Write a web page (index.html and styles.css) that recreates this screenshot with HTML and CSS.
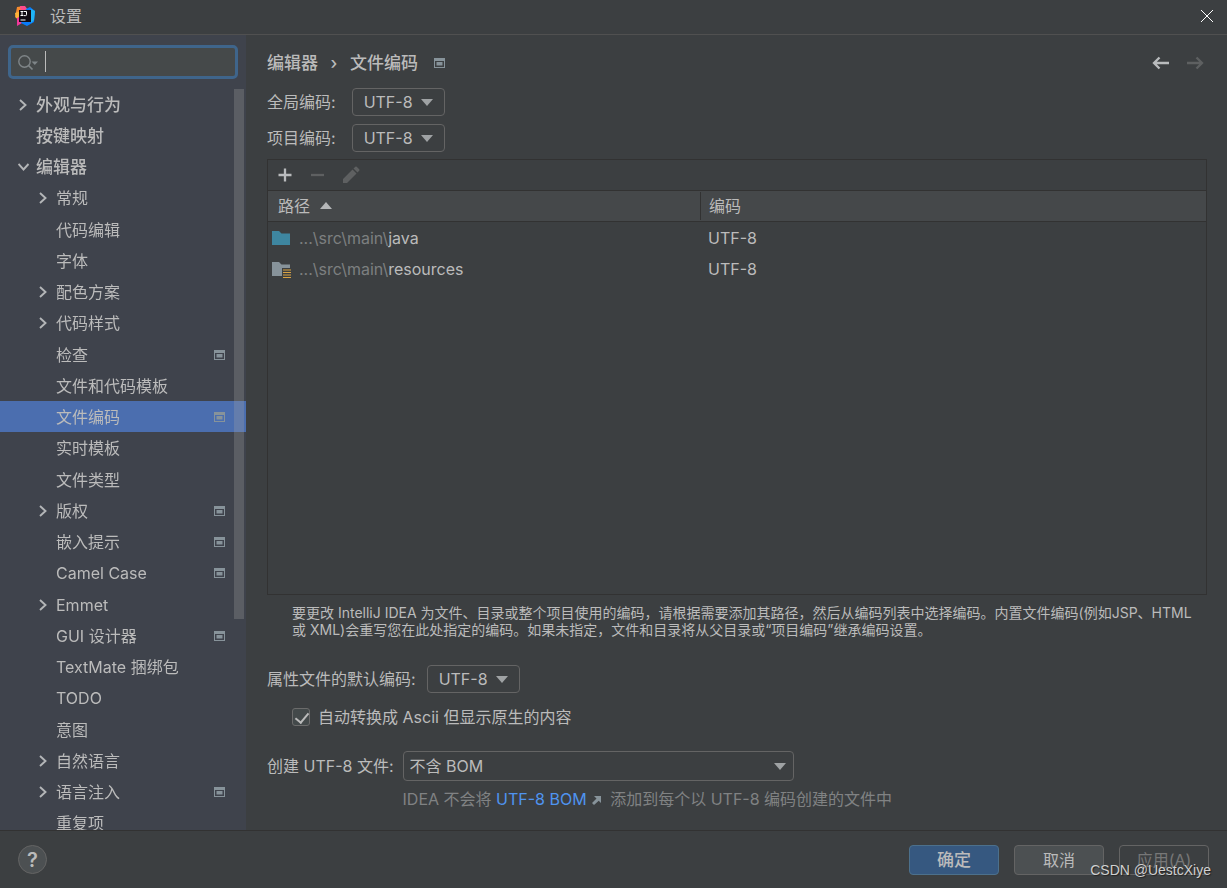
FILE: index.html
```html
<!DOCTYPE html>
<html lang="zh-CN">
<head>
<meta charset="utf-8">
<title>设置</title>
<meta name="viewport" content="width=device-width, initial-scale=1">
<link rel="stylesheet" href="styles.css">
</head>
<body>
<svg class="defs" aria-hidden="true">
  <symbol id="right" viewBox="0 0 10 12"><path d="M2 1 7.500 6 2 11" fill="none" stroke="#b4b6b8" stroke-width="1.900"/></symbol>
  <symbol id="down" viewBox="0 0 12 12"><path d="M0.500 3 5.500 8.500 10.500 3" fill="none" stroke="#b4b6b8" stroke-width="1.900"/></symbol>
  <symbol id="proj" viewBox="0 0 11 10"><path d="M0 0h11v10H0zM1 3v6h9V3z" fill="#87939a" fill-rule="evenodd"/><path d="M2.500 4h6v3.500h-6z" fill="#87939a"/></symbol>
</svg>
<div class="window">
  <header class="titlebar">
    <svg class="logo" viewBox="0 0 20 20" aria-hidden="true">
      <path d="M2 1 9 0 12 5 5 15 0 11z" fill="#f58b2f"/>
      <path d="M5 0 10 0 13 4 6 7z" fill="#fe4a8b"/>
      <path d="M0 7 6 5 5 13 1 12z" fill="#fbb43a"/>
      <path d="M2 12 8 9 9 17 7 17 2 20z" fill="#f0389a"/>
      <path d="M11 3 15 1 20 5 19 16 12 20 6 17z" fill="#087cfa"/>
      <path d="M16 3 20 5 19 14 16 17z" fill="#20b5f5"/>
      <path d="M4 4h12v12H4z" fill="#110b12"/>
      <path d="M5.500 5.500h3M7 5.500v4M5.500 9.500h3M9 5.500h2.500v3.200q0 .9-1 .9H9M5.500 14h5" fill="none" stroke="#fff"/>
    </svg>
    <h1 class="title">设置</h1>
    <button class="icon-button close" type="button" aria-label="关闭"><svg width="12" height="12" viewBox="0 0 12 12"><path d="M0 0 12 12M12 0 0 12" stroke="#fff" stroke-width="1"/></svg></button>
  </header>

  <div class="body">
    <nav class="sidebar" aria-label="设置">
      <div class="search">
        <svg class="search-icon" width="20" height="16" viewBox="0 0 20 16" aria-hidden="true"><circle cx="6.500" cy="6.500" r="5.700" fill="none" stroke="#7f8588" stroke-width="1.400"/><path d="m10.500 10.500 4 4" stroke="#7f8588" stroke-width="1.700"/><path d="M13.500 6.500H20l-3.200 3.600z" fill="#7f8588"/></svg>
        <input class="search-input" type="text" aria-label="搜索" autofocus>
        <span class="caret"></span>
      </div>
      <div class="tree-area">
        <ul class="tree">
          <li class="row top"><svg class="arrow"><use href="#right"/></svg><span>外观与行为</span></li>
          <li class="row top"><span class="arrow"></span><span>按键映射</span></li>
          <li class="row top"><svg class="arrow open"><use href="#down"/></svg><span>编辑器</span></li>
          <li class="row"><svg class="arrow"><use href="#right"/></svg><span>常规</span></li>
          <li class="row"><span class="arrow"></span><span>代码编辑</span></li>
          <li class="row"><span class="arrow"></span><span>字体</span></li>
          <li class="row"><svg class="arrow"><use href="#right"/></svg><span>配色方案</span></li>
          <li class="row"><svg class="arrow"><use href="#right"/></svg><span>代码样式</span></li>
          <li class="row"><span class="arrow"></span><span>检查</span><svg class="proj"><use href="#proj"/></svg></li>
          <li class="row"><span class="arrow"></span><span>文件和代码模板</span></li>
          <li class="row selected"><span class="arrow"></span><span>文件编码</span><svg class="proj"><use href="#proj"/></svg></li>
          <li class="row"><span class="arrow"></span><span>实时模板</span></li>
          <li class="row"><span class="arrow"></span><span>文件类型</span></li>
          <li class="row"><svg class="arrow"><use href="#right"/></svg><span>版权</span><svg class="proj"><use href="#proj"/></svg></li>
          <li class="row"><span class="arrow"></span><span>嵌入提示</span><svg class="proj"><use href="#proj"/></svg></li>
          <li class="row"><span class="arrow"></span><span>Camel Case</span><svg class="proj"><use href="#proj"/></svg></li>
          <li class="row"><svg class="arrow"><use href="#right"/></svg><span>Emmet</span></li>
          <li class="row"><span class="arrow"></span><span>GUI 设计器</span><svg class="proj"><use href="#proj"/></svg></li>
          <li class="row"><span class="arrow"></span><span>TextMate 捆绑包</span></li>
          <li class="row"><span class="arrow"></span><span>TODO</span></li>
          <li class="row"><span class="arrow"></span><span>意图</span></li>
          <li class="row"><svg class="arrow"><use href="#right"/></svg><span>自然语言</span></li>
          <li class="row"><svg class="arrow"><use href="#right"/></svg><span>语言注入</span><svg class="proj"><use href="#proj"/></svg></li>
          <li class="row"><span class="arrow"></span><span>重复项</span></li>
        </ul>
        <div class="scroll-thumb"></div>
      </div>
    </nav>

    <main class="main">
      <div class="heading">
        <h2 class="crumbs"><span>编辑器</span><span class="sep">›</span><span>文件编码</span></h2>
        <svg class="crumb-proj"><use href="#proj"/></svg>
        <button class="icon-button back" type="button" aria-label="后退"><svg width="18" height="14" viewBox="0 0 18 14"><path d="M17 7H2M7.500 1.500 2 7l5.500 5.500" fill="none" stroke="#b9bbbd" stroke-width="2.300"/></svg></button>
        <button class="icon-button" type="button" aria-label="前进" disabled><svg width="18" height="14" viewBox="0 0 18 14"><path d="M1 7h15M10.500 1.500 16 7l-5.500 5.500" fill="none" stroke="#5e6061" stroke-width="2.300"/></svg></button>
      </div>

      <div class="field">
        <label for="global">全局编码:</label>
        <span class="combo"><select id="global"><option>UTF-8</option></select></span>
      </div>
      <div class="field">
        <label for="project">项目编码:</label>
        <span class="combo"><select id="project"><option>UTF-8</option></select></span>
      </div>

      <section class="panel">
        <div class="toolbar">
          <button class="icon-button" type="button" aria-label="添加"><svg width="14" height="14" viewBox="0 0 14 14"><path d="M7 0.500v13M0.500 7h13" stroke="#b9bbbd" stroke-width="2.300"/></svg></button>
          <button class="icon-button" type="button" aria-label="移除" disabled><svg width="14" height="14" viewBox="0 0 14 14"><path d="M1 7h13" stroke="#5e6061" stroke-width="2.300"/></svg></button>
          <button class="icon-button" type="button" aria-label="编辑" disabled><svg width="18" height="18" viewBox="0 0 18 18"><path d="M1 13 10.500 3.500l4 4L5 17H1zM11.500 2.500 13.300.8q.7-.7 1.400 0l2.500 2.500q.7.7 0 1.400l-1.700 1.800z" fill="#5e6061"/></svg></button>
        </div>
        <table class="paths">
          <thead>
            <tr><th class="path-col" scope="col">路径<svg class="sort" width="12" height="7" viewBox="0 0 12 7"><path d="M0 7 6 0l6 7z" fill="#b4b6b8"/></svg></th><th scope="col"><span class="divided">编码</span></th></tr>
          </thead>
          <tbody>
            <tr><td><span class="path"><svg width="20" height="18" viewBox="0 0 20 18"><path d="M0 2h7l2.500 2.500H18V16H0z" fill="#3e86a0"/></svg><span><span class="dim">...\src\main\</span>java</span></span></td><td>UTF-8</td></tr>
            <tr><td><span class="path"><svg width="20" height="18" viewBox="0 0 20 18"><path d="M0 2h7l2.500 2.500H18V8h-8v8H0z" fill="#87939a"/><path d="M11 10h8M11 12.500h8M11 15h8M11 17.500h8" stroke="#d9a343" stroke-width="1.200"/></svg><span><span class="dim">...\src\main\</span>resources</span></span></td><td>UTF-8</td></tr>
          </tbody>
        </table>
      </section>

      <p class="note">要更改 IntelliJ IDEA 为文件、目录或整个项目使用的编码，请根据需要添加其路径，然后从编码列表中选择编码。内置文件编码(例如JSP、HTML 或 XML)会重写您在此处指定的编码。如果未指定，文件和目录将从父目录或“项目编码”继承编码设置。</p>

      <div class="field props">
        <label for="props">属性文件的默认编码:</label>
        <span class="combo"><select id="props"><option>UTF-8</option></select></span>
      </div>
      <div class="check-row">
        <input class="check" id="ascii" type="checkbox" checked>
        <label for="ascii">自动转换成 Ascii 但显示原生的内容</label>
      </div>
      <div class="bom">
        <label for="bom">创建 UTF-8 文件:</label>
        <span class="combo wide"><select id="bom"><option>不含 BOM</option></select></span>
        <p class="bom-hint">IDEA 不会将 <a class="link" href="#bom">UTF-8 BOM<svg class="ext" width="9" height="9" viewBox="0 0 9 9"><path d="M2 0h7v7L6.700 4.700 2 9 0 7l4.500-4.500z" fill="#87939a"/></svg></a> 添加到每个以 UTF-8 编码创建的文件中</p>
      </div>
    </main>
  </div>

  <footer class="footer">
    <button class="help" type="button" aria-label="帮助">?</button>
    <button class="btn primary" type="button">确定</button>
    <button class="btn" type="button">取消</button>
    <button class="btn apply" type="button" disabled>应用(A)</button>
    <span class="watermark">CSDN @UestcXiye</span>
  </footer>
</div>
</body>
</html>
```
FILE: styles.css
```css
* { box-sizing: border-box; }
html, body { height: 100%; }
body {
  margin: 0;
  background: #3c3f41;
  color: #bbbbbb;
  font: 400 16px/20px Inter, "Noto Sans CJK SC", sans-serif;
  overflow: hidden;
}
h1, h2, p, ul { margin: 0; padding: 0; }
button, input, select { font: inherit; color: inherit; }
svg { display: block; flex: none; }
.defs { position: absolute; width: 0; height: 0; }
.icon-button { display: flex; padding: 0; border: 0; background: none; }

.window { display: flex; flex-direction: column; height: 100vh; }

.titlebar {
  display: flex;
  align-items: center;
  height: 35px;
  padding: 0 14px 2px 15px;
  border-bottom: 1px solid #505050;
}
.logo { width: 20px; height: 20px; }
.title { margin-left: 15px; font-size: 16px; font-weight: 400; }
.close { margin-left: auto; }

.body { display: flex; flex: 1; min-height: 0; }

.sidebar {
  display: flex;
  flex-direction: column;
  flex: none;
  width: 246px;
  background: #3f434c;
}
.search {
  position: relative;
  display: flex;
  align-items: center;
  height: 34px;
  margin: 10px 8px;
}
.search-input {
  width: 100%;
  height: 34px;
  padding: 0 8px 0 34px;
  border: 3px solid #3f658b;
  border-radius: 5px;
  outline: 0;
  background: #45494a;
  caret-color: transparent;
}
.search-icon { position: absolute; left: 10px; top: 10px; }
.caret { position: absolute; left: 37px; top: 6px; width: 1px; height: 21px; background: #bbbbbb; }

.tree-area { position: relative; flex: 1; min-height: 0; overflow: hidden; }
.tree { list-style: none; }
.row {
  display: flex;
  align-items: center;
  height: 31px;
  padding: 0 21px 0 38px;
  white-space: nowrap;
}
.row:nth-child(4n) { height: 32px; }
.row.top { padding-left: 18px; font-size: 17px; font-weight: 500; }
.row.selected { background: #4b6eaf; }
.arrow { width: 10px; height: 12px; margin-right: 8px; }
.arrow.open { width: 12px; }
.top .arrow.open { margin-right: 6px; }
.proj { width: 11px; height: 10px; margin-left: auto; }
.scroll-thumb {
  position: absolute;
  top: 0;
  right: 2px;
  width: 10px;
  height: 530px;
  background: rgba(166, 166, 166, 0.28);
}

.main {
  display: flex;
  flex-direction: column;
  flex: 1;
  min-width: 0;
  padding: 12px 20px 21px 21px;
}
.heading { display: flex; align-items: center; height: 32px; margin-bottom: 9px; }
.crumbs { display: flex; font-size: 17px; font-weight: 500; }
.sep { width: 32px; text-align: center; }
.crumb-proj { width: 11px; height: 10px; margin-left: 16px; }
.back { margin: 0 16px 0 auto; }
.heading .icon-button:last-child { margin-right: 3px; }

.field { display: flex; align-items: center; gap: 16px; margin-bottom: 8px; }
.field + .panel { margin-top: -1px; }
.combo { position: relative; display: flex; width: 93px; }
.combo select {
  width: 100%;
  height: 28px;
  padding: 0 26px 0 11px;
  border: 1px solid #646464;
  border-radius: 4px;
  background: #3c3f41;
  appearance: none;
}
.combo::after {
  content: "";
  position: absolute;
  right: 12px;
  top: 11px;
  border: 6px solid transparent;
  border-top: 7px solid #9fa2a4;
  border-bottom: 0;
  pointer-events: none;
}

.panel { flex: 1; min-height: 0; border: 1px solid #323232; }
.toolbar { display: flex; align-items: center; gap: 18px; height: 30px; padding: 0 10px; }
.paths { width: 100%; border-collapse: collapse; table-layout: fixed; }
.paths th {
  height: 31px;
  padding: 0 0 0 10px;
  border: solid #323232;
  border-width: 1px 0;
  background: #45484a;
  font-weight: 400;
  text-align: left;
}
.paths .path-col { width: 432px; }
.paths th + th { padding: 0; }
.divided { display: block; padding: 4px 0 4px 8px; border-left: 1px solid #323232; }
.sort { display: inline-block; margin-left: 10px; vertical-align: 3px; }
.paths td { height: 31px; padding: 2px 0 0 8px; }
.paths td:first-child { padding-left: 4px; }
.path { display: flex; align-items: center; gap: 7px; }
.dim { color: #7d7f80; }

.note { margin: 9px 8px 27px 25px; font-size: 14px; line-height: 17px; }
.props { gap: 11px; margin-bottom: 12px; }
.check-row { display: flex; align-items: center; gap: 8px; height: 24px; margin: 0 0 22px 25px; }
.check {
  position: relative;
  width: 18px;
  height: 18px;
  margin: 0;
  border: 1px solid #6b6b6b;
  border-radius: 3px;
  background: #43494a;
  appearance: none;
}
.check:checked::after {
  content: "";
  position: absolute;
  left: 5px;
  top: 1px;
  width: 6px;
  height: 11px;
  border: solid #bbbbbb;
  border-width: 0 2px 2px 0;
  transform: rotate(40deg);
}
.bom { display: grid; grid-template-columns: auto 1fr; align-items: center; gap: 8px 9px; }
.combo.wide { width: 391px; max-width: 100%; }
.wide select { height: 30px; padding-left: 6px; }
.wide::after { right: 8px; top: 12px; }
.bom-hint { grid-column: 2; color: #808283; }
.link { color: #4f94f0; text-decoration: none; }
.ext { display: inline-block; margin: 0 5px; }

.footer {
  position: relative;
  display: flex;
  align-items: center;
  gap: 15px;
  flex: none;
  height: 58px;
  padding: 0 18px;
  border-top: 1px solid #323232;
}
.help {
  width: 29px;
  height: 29px;
  margin-right: auto;
  padding: 0;
  border: 1px solid #646464;
  border-radius: 50%;
  background: #4c5052;
  font-size: 20px;
  font-weight: 600;
}
.btn {
  width: 90px;
  height: 30px;
  padding: 0;
  border: 1px solid #646464;
  border-radius: 4px;
  background: #4c5052;
}
.primary { border-color: #4c708c; background: #365880; font-size: 17px; font-weight: 500; }
.apply { background: #3c3f41; color: #777777; }
.watermark {
  position: absolute;
  right: 16px;
  bottom: 8px;
  color: #d0d0d0;
  font: 14px/20px "Liberation Sans", sans-serif;
  text-shadow: 1px 1px 1px #222222;
}
```
